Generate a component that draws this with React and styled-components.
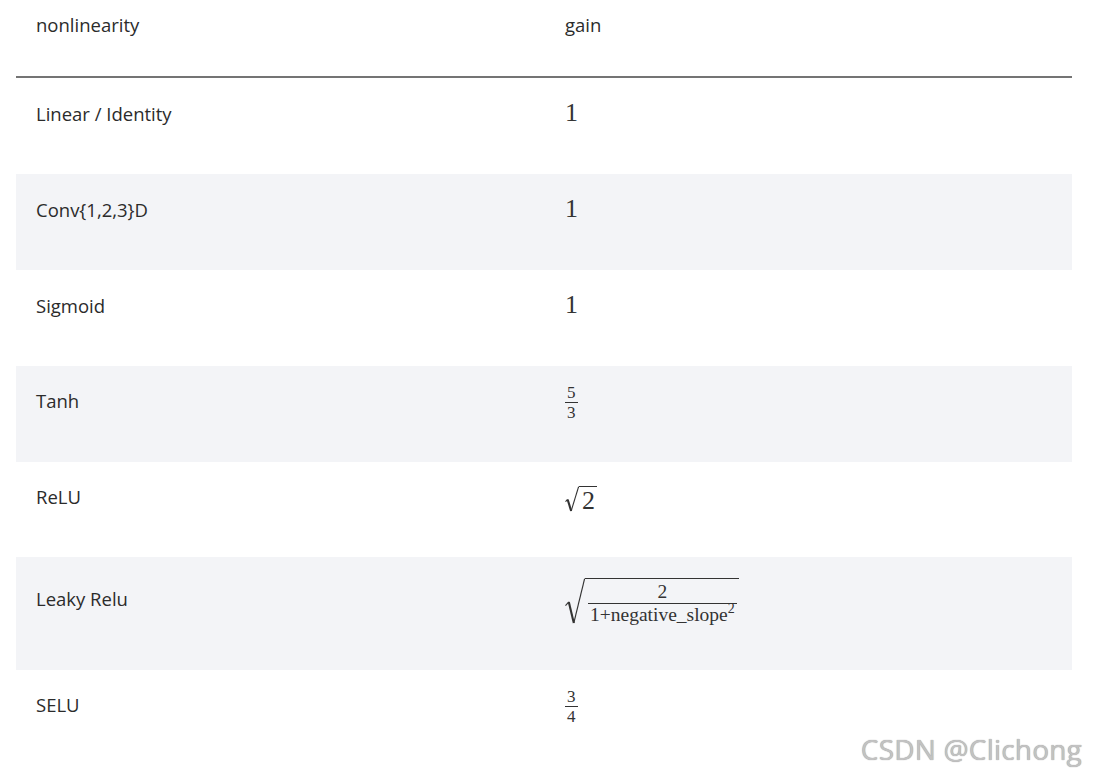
import styled, { createGlobalStyle } from "styled-components";

const GlobalStyle = createGlobalStyle`
  html, body {
    margin: 0;
    padding: 0;
    background: #ffffff;
  }
  body {
    font-family: "Open Sans", "Liberation Sans", sans-serif;
    color: #2b2b2b;
  }
`;

const Page = styled.div`
  position: relative;
  width: 1096px;
  height: 778px;
  overflow: hidden;
`;

const Table = styled.table`
  margin-left: 16px;
  width: 1056px;
  border-collapse: collapse;
  table-layout: fixed;
`;

const HeadCell = styled.th`
  text-align: left;
  font-weight: 400;
  font-size: 18.5px;
  line-height: 26px;
  padding: 12px 20px 38px;
  border-bottom: 2px solid #747474;
  vertical-align: middle;
`;

const Row = styled.tr`
  background: ${(p) => (p.$shaded ? "#f3f4f7" : "#ffffff")};
`;

const Cell = styled.td`
  font-size: 18.5px;
  line-height: 38px;
  padding: 16px 20px 41px;
  vertical-align: baseline;
  white-space: nowrap;
`;

const Num = styled.span`
  font-family: "Liberation Serif", "DejaVu Serif", serif;
  font-size: 26px;
  color: #333;
`;

const Frac = styled.span`
  display: inline-flex;
  flex-direction: column;
  align-items: center;
  vertical-align: middle;
  font-family: "Liberation Serif", "DejaVu Serif", serif;
  font-size: ${(p) => p.$size || 17}px;
  line-height: 0.95;
  color: #333;
`;

const Numer = styled.span`
  padding: 0 2px 1px;
  border-bottom: 1.3px solid #333;
  align-self: stretch;
  text-align: center;
`;

const Denom = styled.span`
  padding: 2px 2px 0;

  sup {
    font-size: 0.72em;
    line-height: 0;
    vertical-align: 0.55em;
  }
`;

const SqrtBox = styled.span`
  display: inline-flex;
  align-items: stretch;
  vertical-align: middle;
  margin: ${(p) => p.$margin || 0}px 0;
  color: #333;
`;

const Radicand = styled.span`
  border-top: 1.3px solid #333;
  padding: ${(p) => p.$pad || 2}px 2px 0 3px;
  font-family: "Liberation Serif", "DejaVu Serif", serif;
  font-size: 26px;
  line-height: 22px;
`;

const Radical = ({ h, w = 14 }) => (
  <svg width={w} height={h} viewBox={`0 0 ${w} ${h}`} style={{ display: "block" }}>
    <path
      d={`M0.5 ${h * 0.6} L${w * 0.19} ${h * 0.52}`}
      stroke="#333"
      strokeWidth="1.1"
      fill="none"
    />
    <path
      d={`M${w * 0.19} ${h * 0.52} L${w * 0.44} ${h - 1}`}
      stroke="#333"
      strokeWidth="2.1"
      fill="none"
    />
    <path
      d={`M${w * 0.44} ${h - 1} L${w - 0.4} 0.7`}
      stroke="#333"
      strokeWidth="1.1"
      fill="none"
    />
  </svg>
);

const Watermark = styled.div`
  position: absolute;
  right: 14px;
  bottom: 10px;
  font-family: "Open Sans", "Liberation Sans", sans-serif;
  font-size: 28px;
  color: #c2c2c2;
  text-shadow: 0 0 1px #8a8a8a;
  letter-spacing: 0.2px;
`;

const rows = [
  { name: "Linear / Identity", gain: <Num>1</Num> },
  { name: "Conv{1,2,3}D", gain: <Num>1</Num> },
  { name: "Sigmoid", gain: <Num>1</Num> },
  {
    name: "Tanh",
    gain: (
      <Frac>
        <Numer>5</Numer>
        <Denom>3</Denom>
      </Frac>
    ),
  },
  {
    name: "ReLU",
    gain: (
      <SqrtBox>
        <Radical h={26} />
        <Radicand $pad={3}>2</Radicand>
      </SqrtBox>
    ),
  },
  {
    name: "Leaky Relu",
    gain: (
      <SqrtBox $margin={5}>
        <Radical h={46} w={20} />
        <Radicand $pad={4}>
          <Frac $size={19.5}>
            <Numer>2</Numer>
            <Denom>
              1+negative_slope<sup>2</sup>
            </Denom>
          </Frac>
        </Radicand>
      </SqrtBox>
    ),
  },
  {
    name: "SELU",
    gain: (
      <Frac>
        <Numer>3</Numer>
        <Denom>4</Denom>
      </Frac>
    ),
  },
];

export default function App() {
  return (
    <Page>
      <GlobalStyle />
      <Table>
        <colgroup>
          <col style={{ width: 529 }} />
          <col />
        </colgroup>
        <thead>
          <tr>
            <HeadCell>nonlinearity</HeadCell>
            <HeadCell>gain</HeadCell>
          </tr>
        </thead>
        <tbody>
          {rows.map((r, i) => (
            <Row key={r.name} $shaded={i % 2 === 1}>
              <Cell>{r.name}</Cell>
              <Cell>{r.gain}</Cell>
            </Row>
          ))}
        </tbody>
      </Table>
      <Watermark>CSDN @Clichong</Watermark>
    </Page>
  );
}
